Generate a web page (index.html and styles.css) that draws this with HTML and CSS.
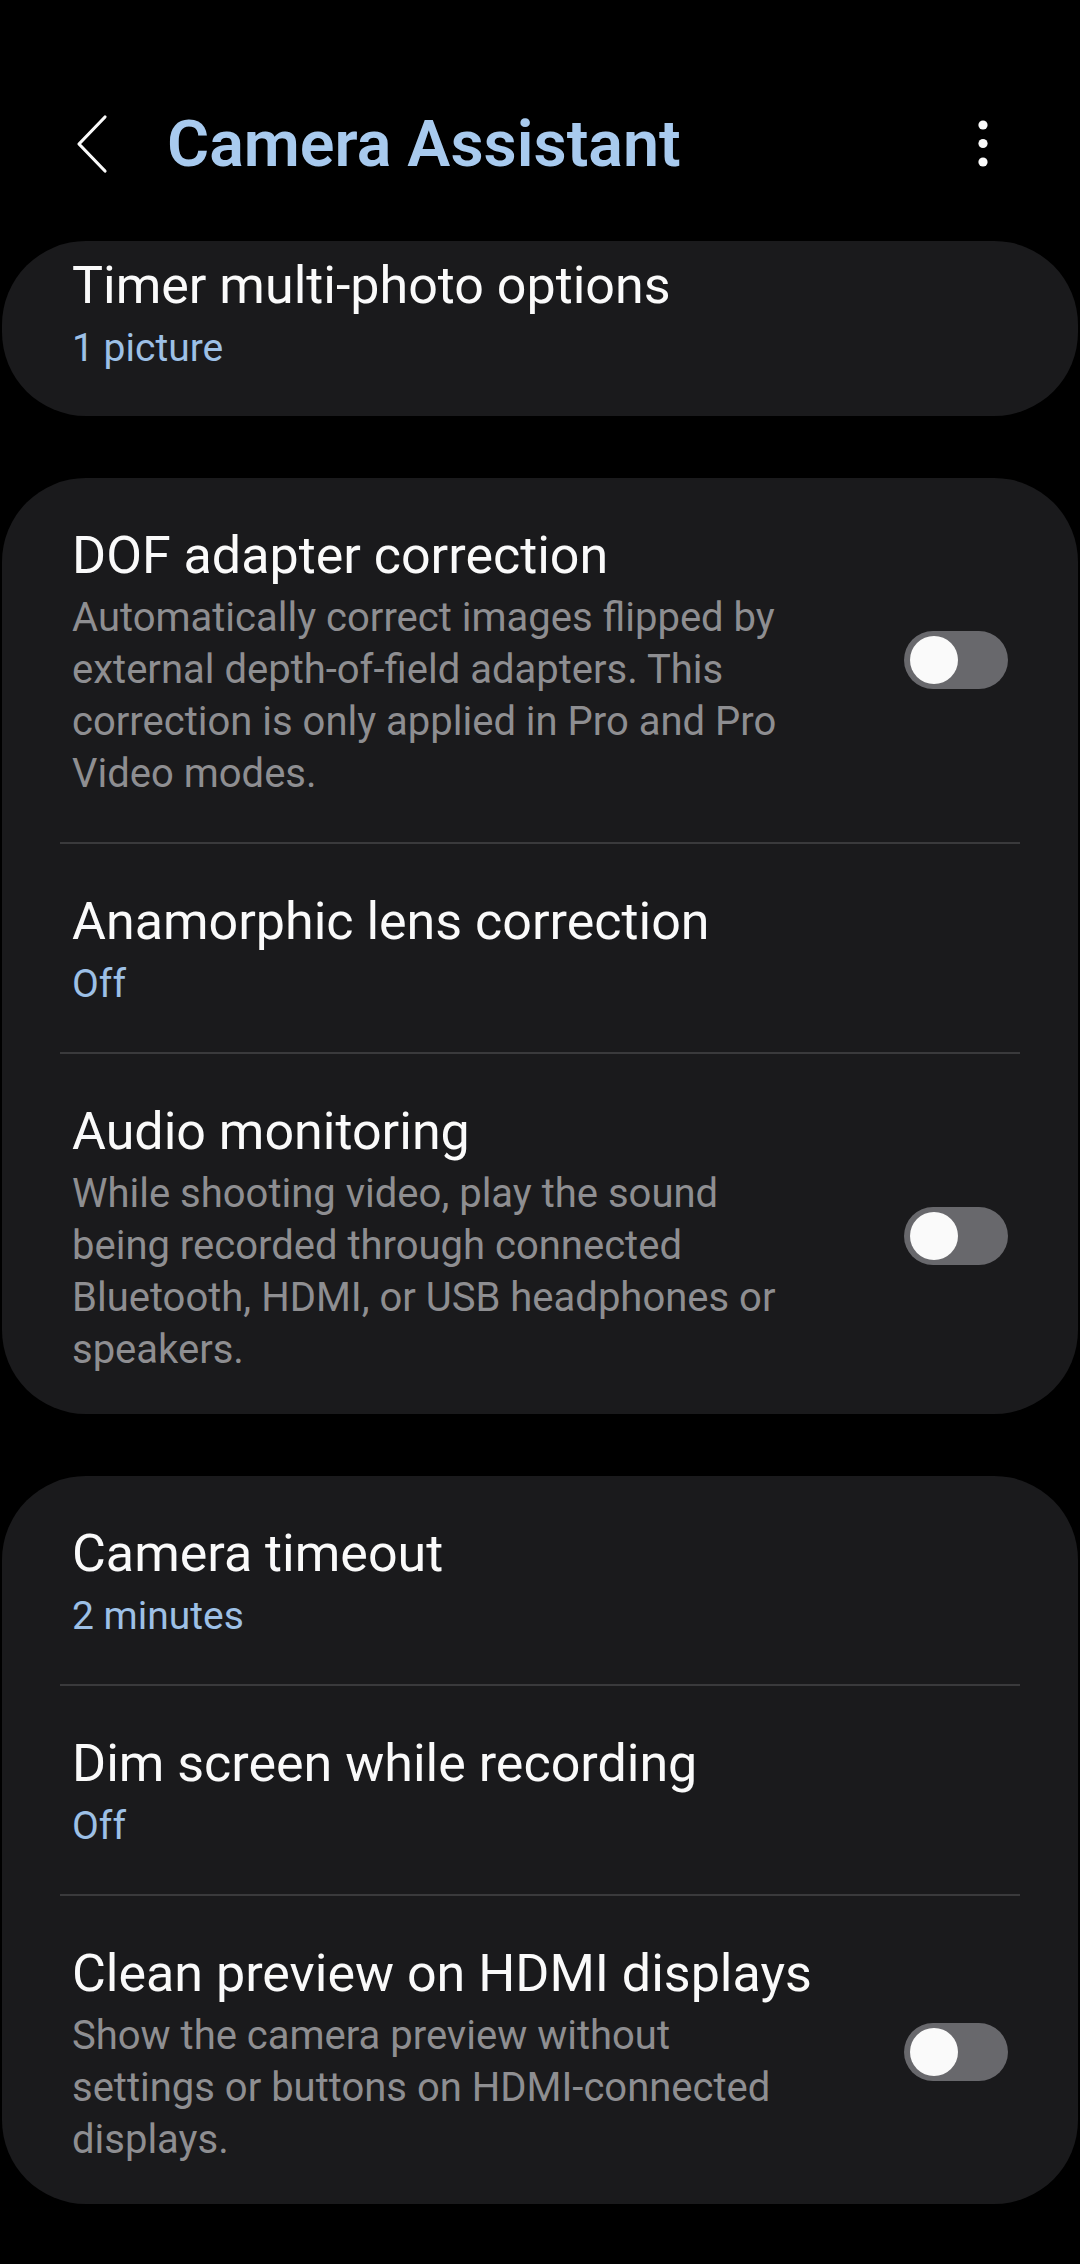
FILE: index.html
```html
<!DOCTYPE html>
<html lang="en">
<head>
<meta charset="utf-8">
<title>Camera Assistant</title>
<link rel="stylesheet" href="styles.css">
</head>
<body>
<div class="screen">
  <header class="appbar">
    <svg class="back" viewBox="0 0 40 60" width="40" height="60" aria-hidden="true">
      <path d="M33 3 L7 30 L33 57" fill="none" stroke="#fafafa" stroke-width="3.2" stroke-linecap="round" stroke-linejoin="round"/>
    </svg>
    <h1 class="appbar-title">Camera Assistant</h1>
    <svg class="more" viewBox="0 0 20 60" width="20" height="60" aria-hidden="true">
      <circle cx="10" cy="11" r="4.6" fill="#fafafa"/>
      <circle cx="10" cy="29.5" r="4.6" fill="#fafafa"/>
      <circle cx="10" cy="48" r="4.6" fill="#fafafa"/>
    </svg>
  </header>

  <main class="list">
    <section class="card card-first">
      <div class="item item-first">
        <div class="item-text">
          <div class="item-title">Timer multi-photo options</div>
          <div class="item-value">1 picture</div>
        </div>
      </div>
    </section>

    <section class="card">
      <div class="item">
        <div class="item-text">
          <div class="item-title">DOF adapter correction</div>
          <div class="item-desc">Automatically correct images flipped by external depth-of-field adapters. This correction is only applied in Pro and Pro Video modes.</div>
        </div>
        <div class="switch"><div class="knob"></div></div>
      </div>
      <div class="divider"></div>
      <div class="item">
        <div class="item-text">
          <div class="item-title">Anamorphic lens correction</div>
          <div class="item-value">Off</div>
        </div>
      </div>
      <div class="divider"></div>
      <div class="item item-last">
        <div class="item-text">
          <div class="item-title">Audio monitoring</div>
          <div class="item-desc">While shooting video, play the sound being recorded through connected Bluetooth, HDMI, or USB headphones or speakers.</div>
        </div>
        <div class="switch"><div class="knob"></div></div>
      </div>
    </section>

    <section class="card">
      <div class="item">
        <div class="item-text">
          <div class="item-title">Camera timeout</div>
          <div class="item-value">2 minutes</div>
        </div>
      </div>
      <div class="divider"></div>
      <div class="item">
        <div class="item-text">
          <div class="item-title">Dim screen while recording</div>
          <div class="item-value">Off</div>
        </div>
      </div>
      <div class="divider"></div>
      <div class="item item-last">
        <div class="item-text">
          <div class="item-title">Clean preview on HDMI displays</div>
          <div class="item-desc">Show the camera preview without settings or buttons on HDMI-connected displays.</div>
        </div>
        <div class="switch"><div class="knob"></div></div>
      </div>
    </section>
  </main>
</div>
</body>
</html>
```

FILE: styles.css
```css
html, body {
  margin: 0;
  padding: 0;
  background: #000;
}

body {
  font-family: Roboto, "Noto Sans", "Liberation Sans", sans-serif;
  color: #fafafa;
  width: 1080px;
  height: 2264px;
  overflow: hidden;
}

.screen {
  padding-top: 94px;
}

.appbar {
  display: flex;
  align-items: center;
  height: 100px;
}

.back {
  display: block;
  margin-left: 72px;
  flex: none;
}

.appbar-title {
  margin: 0 0 0 55px;
  flex: 1;
  font-size: 64.5px;
  font-weight: 600;
  color: #a8caee;
  letter-spacing: 0;
  line-height: 100px;
  white-space: nowrap;
}

.more {
  display: block;
  flex: none;
  margin-right: 87px;
}

.list {
  display: flex;
  flex-direction: column;
  gap: 62px;
  margin-top: 47px;
}

.card {
  margin: 0 2px;
  background: #1a1a1c;
  border-radius: 84px;
}

.item {
  display: flex;
  align-items: center;
  padding: 42px 70px 42px 70px;
}

.item-first {
  padding-top: 9px;
}

.item-last {
  padding-bottom: 38px;
}

.item-text {
  width: 736px;
  flex: none;
}

.item-title {
  font-size: 52px;
  line-height: 72px;
  color: #fafafa;
  white-space: nowrap;
}

.item-value {
  font-size: 39px;
  line-height: 52px;
  color: #9dc0e6;
}

.item-desc {
  font-size: 40px;
  line-height: 52px;
  color: #8e8e91;
}

.switch {
  margin-left: auto;
  flex: none;
  width: 104px;
  height: 58px;
  border-radius: 29px;
  background: #68686c;
  position: relative;
}

.knob {
  position: absolute;
  left: 6px;
  top: 5px;
  width: 48px;
  height: 48px;
  border-radius: 50%;
  background: #fafafa;
}

.divider {
  height: 2px;
  margin: 0 58px;
  background: #3a3a3c;
}
```
